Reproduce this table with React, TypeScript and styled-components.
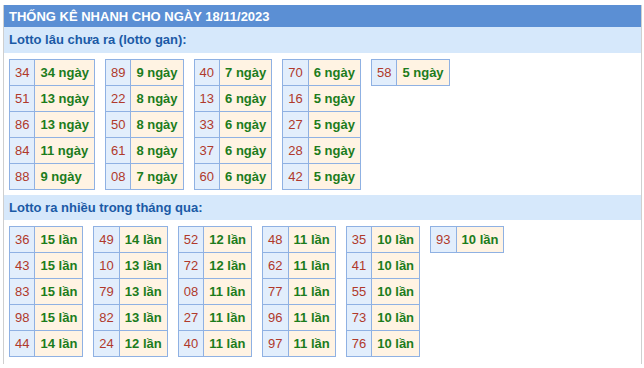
import React from 'react'
import styled, { createGlobalStyle } from 'styled-components'

const GlobalStyle = createGlobalStyle`
  body {
    margin: 0;
    background: #fff;
    font-family: "Liberation Sans", Arial, sans-serif;
  }
`

const Colors = {
  title: '#5b8fd4',
  sub: '#d6e8fb',
  subText: '#1b5aa6',
  border: '#8fb1e3',
  numBg: '#e2eefc',
  valBg: '#fff3e3',
  red: '#b0392b',
  green: '#1c7c1c',
  frame: '#cfcfcf',
}

const Frame = styled.div`
  margin: 5px 0 0 3px;
  width: 637px;
  border-left: 1px solid ${Colors.frame};
  border-right: 1px solid ${Colors.frame};
  padding-bottom: 2px;
`

const Title = styled.div`
  height: 22px;
  line-height: 23px;
  padding-left: 5px;
  background: ${Colors.title};
  color: #fff;
  font-size: 13px;
  font-weight: bold;
`

const SubHeader = styled.div<{ $h: number }>`
  height: ${p => p.$h}px;
  line-height: ${p => p.$h}px;
  padding-left: 5px;
  background: ${Colors.sub};
  color: ${Colors.subText};
  font-size: 13px;
  font-weight: bold;
`

const Groups = styled.div`
  display: flex;
  align-items: flex-start;
  gap: 10px;
  padding: 6px 0 5px 5px;
`

const Table = styled.table`
  border-collapse: collapse;
  font-size: 13px;
`

const NumCell = styled.td`
  height: 25px;
  padding: 0 5px;
  border: 1px solid ${Colors.border};
  background: ${Colors.numBg};
  color: ${Colors.red};
`

const ValCell = styled.td`
  height: 25px;
  padding: 0 5px;
  border: 1px solid ${Colors.border};
  background: ${Colors.valBg};
  color: ${Colors.green};
  font-weight: bold;
`

type Row = [string, number]

const gan: Row[][] = [
  [['34', 34], ['51', 13], ['86', 13], ['84', 11], ['88', 9]],
  [['89', 9], ['22', 8], ['50', 8], ['61', 8], ['08', 7]],
  [['40', 7], ['13', 6], ['33', 6], ['37', 6], ['60', 6]],
  [['70', 6], ['16', 5], ['27', 5], ['28', 5], ['42', 5]],
  [['58', 5]],
]

const nhieu: Row[][] = [
  [['36', 15], ['43', 15], ['83', 15], ['98', 15], ['44', 14]],
  [['49', 14], ['10', 13], ['79', 13], ['82', 13], ['24', 12]],
  [['52', 12], ['72', 12], ['08', 11], ['27', 11], ['40', 11]],
  [['48', 11], ['62', 11], ['77', 11], ['96', 11], ['97', 11]],
  [['35', 10], ['41', 10], ['55', 10], ['73', 10], ['76', 10]],
  [['93', 10]],
]

const Group = ({ rows, unit }: { rows: Row[][]; unit: string }) => (
  <Groups>
    {rows.map((col, i) => (
      <Table key={i}>
        <tbody>
          {col.map(([num, count]) => (
            <tr key={num}>
              <NumCell>{num}</NumCell>
              <ValCell>{count} {unit}</ValCell>
            </tr>
          ))}
        </tbody>
      </Table>
    ))}
  </Groups>
)

export default function App() {
  return (
    <>
      <GlobalStyle />
      <Frame>
        <Title>THỐNG KÊ NHANH CHO NGÀY 18/11/2023</Title>
        <SubHeader $h={26}>Lotto lâu chưa ra (lotto gan):</SubHeader>
        <Group rows={gan} unit="ngày" />
        <SubHeader $h={25}>Lotto ra nhiều trong tháng qua:</SubHeader>
        <Group rows={nhieu} unit="lần" />
      </Frame>
    </>
  )
}
